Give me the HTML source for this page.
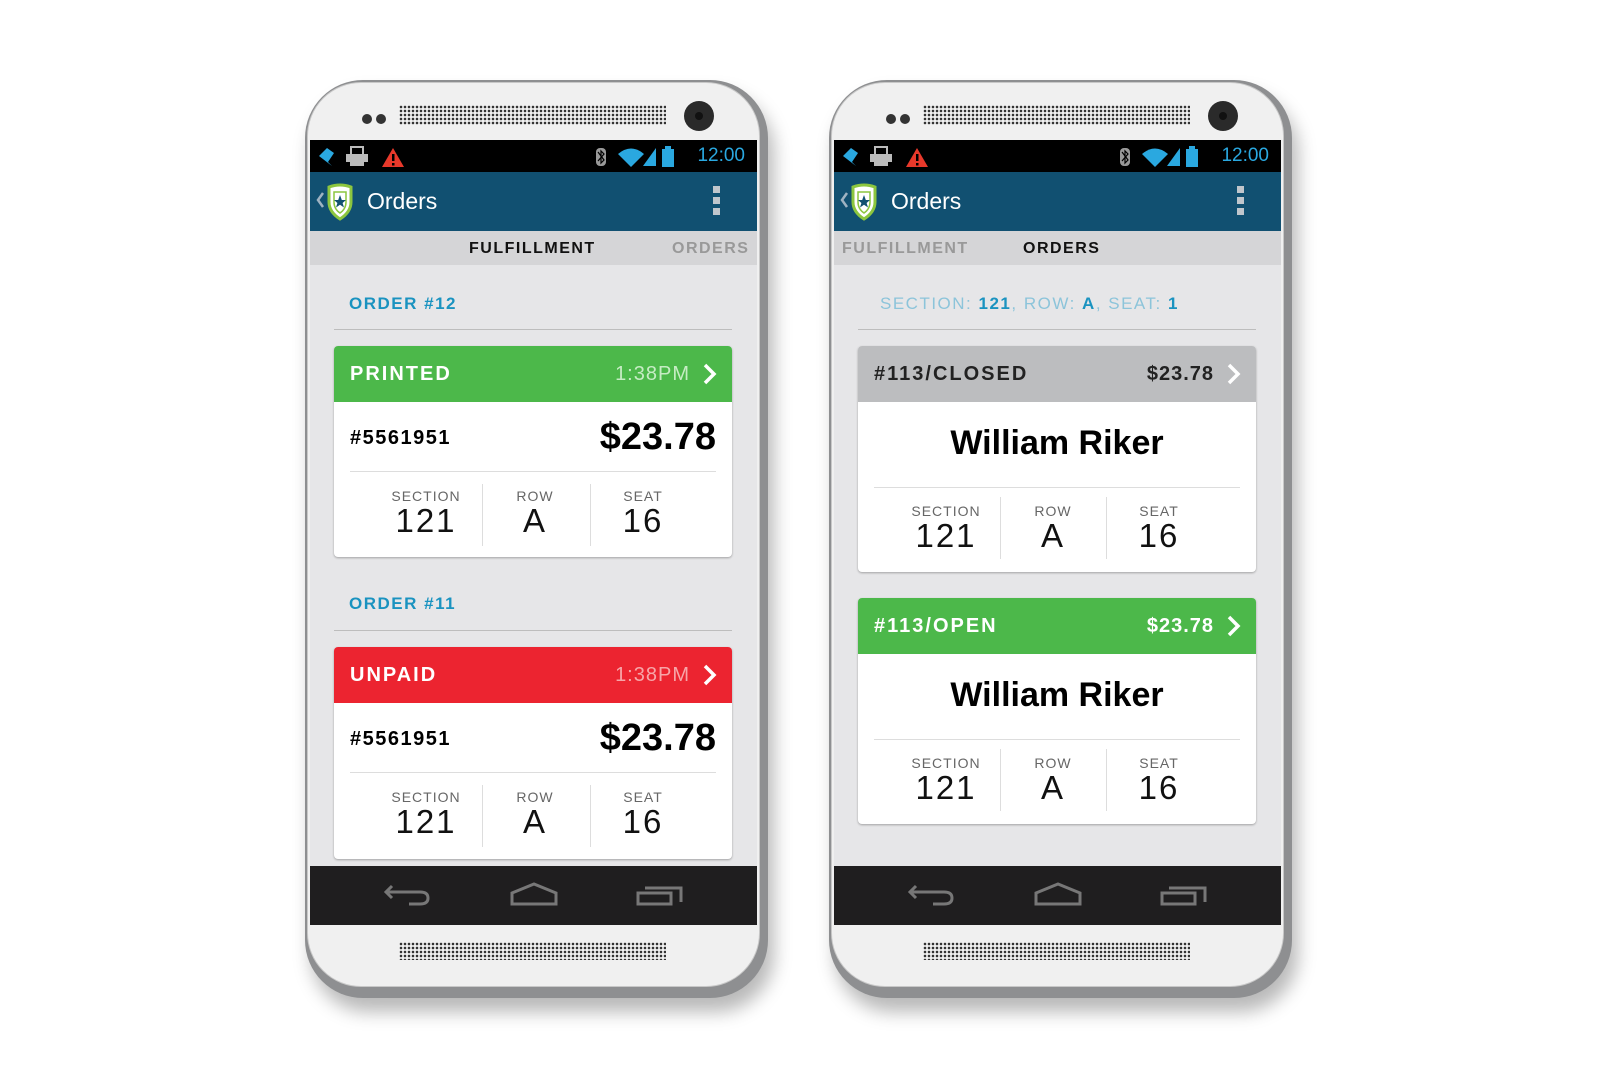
<!DOCTYPE html>
<html><head><meta charset="utf-8"><style>
*{margin:0;padding:0;box-sizing:border-box}
body{width:1600px;height:1080px;background:#fff;position:relative;overflow:hidden;font-family:"Liberation Sans",sans-serif}
.ph{position:absolute;top:80px;width:463px;height:918px}
.outer{position:absolute;left:0;top:0;width:463px;height:918px;border-radius:58px;background:#8e8f91;box-shadow:6px 14px 18px rgba(0,0,0,.28)}
.inner{position:absolute;left:2px;top:2px;width:453px;height:905px;border-radius:54px;background:#f0f0f0;border:1px solid #c8c8c8}
.grille{position:absolute;left:94px;width:267px;height:20px;background-image:radial-gradient(circle,#333 1.1px,transparent 1.5px);background-size:4px 4px}
.dot{position:absolute;width:10px;height:10px;border-radius:50%;background:#333;top:34px}
.cam{position:absolute;left:379px;top:21px;width:30px;height:30px;border-radius:50%;background:#2a2a2a}
.cam:after{content:"";position:absolute;left:11px;top:11px;width:8px;height:8px;border-radius:50%;background:#111}
.scr{position:absolute;left:5px;top:60px;width:447px;height:785px;background:#e6e6e8;overflow:hidden}
.sb{position:absolute;left:0;top:0;width:447px;height:32px;background:#000}
.time{position:absolute;right:12px;top:5px;color:#2aa8e0;font-size:19px}
.ab{position:absolute;left:0;top:32px;width:447px;height:59px;background:#115071}
.ab .t{position:absolute;left:57px;top:16px;color:#fff;font-size:23px}
.menu{position:absolute;left:403px;top:14px;width:7px}
.menu i{display:block;width:7px;height:7px;background:#c0c6cc;margin-bottom:4px}
.tabs{position:absolute;left:0;top:91px;width:447px;height:34px;background:#d5d5d7}
.tab{position:absolute;top:9px;font-size:16px;font-weight:bold;letter-spacing:1.5px}
.nav{position:absolute;left:0;top:726px;width:447px;height:59px;background:#1f1e1f}
.lbl{position:absolute;font-size:17px;font-weight:bold;letter-spacing:1.5px;color:#1a93c0}
.hr{position:absolute;left:24px;width:398px;height:1px;background:#bdbdbd}
.card{position:absolute;left:24px;width:398px;background:#fff;border-radius:4px;box-shadow:0 1px 2px rgba(0,0,0,.3);overflow:hidden}
.hd{position:relative;height:56px;color:#fff}
.hd .a{position:absolute;left:16px;top:17px;font-size:20px;font-weight:bold;letter-spacing:2px}
.hd .b{position:absolute;right:42px;top:17px;font-size:20px;letter-spacing:1px}
.hd svg{position:absolute;right:14px;top:17px}
.num{position:absolute;left:16px;top:81px;font-size:20px;font-weight:bold;letter-spacing:1.5px}
.price{position:absolute;right:16px;top:70px;font-size:38px;font-weight:bold}
.dv{position:absolute;left:16px;right:16px;height:1px;background:#ddd}
.col{position:absolute;width:108px;text-align:center}
.col .l{font-size:14px;color:#666;letter-spacing:1px}
.col .n{font-size:33px;color:#111;letter-spacing:2px;margin-top:-2px}
.vl{position:absolute;width:1px;height:62px;background:#ddd}
.name{position:absolute;left:0;width:398px;text-align:center;top:78px;font-size:34px;font-weight:bold}
</style></head><body>

<!-- PHONE 1 -->
<div class="ph" style="left:305px">
<div class="outer"></div><div class="inner"></div>
<div class="dot" style="left:57px"></div><div class="dot" style="left:71px"></div>
<div class="grille" style="top:25px"></div>
<div class="cam"></div>
<div class="grille" style="top:862px;height:18px"></div>
<div class="scr">
 <div class="sb">
  <svg width="447" height="32" style="position:absolute;left:0;top:0">
   <path d="M9 16 L17 8 L24 13 L18 22 L22 26 Z" fill="#2aa8e0"/>
   <rect x="41" y="7" width="12" height="8" fill="none" stroke="#bbb" stroke-width="2"/><rect x="36" y="14" width="22" height="8" fill="#bbb"/><rect x="40" y="22" width="14" height="4" fill="#bbb"/>
   <path d="M72 27 L83 8 L94 27 Z" fill="#e8392b"/><rect x="82" y="14" width="2.5" height="7" fill="#000"/><rect x="82" y="23" width="2.5" height="2.5" fill="#000"/>
   <rect x="286" y="8" width="10" height="18" rx="4" fill="#999"/><path d="M288 12 L294 20 L291 23 L291 11 L294 14 L288 21" stroke="#000" stroke-width="1.2" fill="none"/>
   <path d="M308 14 Q321 3 334 14 L321 27 Z" fill="#2aa8e0"/>
   <path d="M333 26 L346 8 L346 26 Z" fill="#2aa8e0"/>
   <rect x="352" y="9" width="12" height="18" fill="#2aa8e0"/><rect x="355" y="6" width="6" height="3" fill="#2aa8e0"/>
  </svg>
  <div class="time">12:00</div>
 </div>
 <div class="ab">
  <svg width="50" height="40" style="position:absolute;left:4px;top:10px">
   <path d="M9 11 L4 18 L9 25" stroke="#9fb3c2" stroke-width="2.5" fill="none"/>
   <path d="M15 5 Q26 1 37 5 L37 20 Q37 30 26 37 Q15 30 15 20 Z" fill="#fff" stroke="#8cc63f" stroke-width="3"/>
   <path d="M20 10 L32 10 L32 20 Q32 27 26 31 Q20 27 20 20 Z" fill="#fff" stroke="#8cc63f" stroke-width="1.5"/>
   <path d="M26 13 L27.8 18 L32 18 L28.6 21 L30 25.5 L26 22.7 L22 25.5 L23.4 21 L20 18 L24.2 18 Z" fill="#115071"/>
  </svg>
  <div class="t">Orders</div>
  <div class="menu"><i></i><i></i><i></i></div>
 </div>
 <div class="tabs">
  <div class="tab" style="left:159px;color:#111">FULFILLMENT</div>
  <div class="tab" style="left:362px;color:#999">ORDERS</div>
 </div>

 <div class="lbl" style="left:39px;top:154px">ORDER #12</div>
 <div class="hr" style="top:189px"></div>
 <div class="card" style="top:206px;height:211px">
  <div class="hd" style="background:#4cb84a"><div class="a">PRINTED</div><div class="b" style="color:#c6ecc4">1:38PM</div>
   <svg width="16" height="22"><path d="M3 2 L12 11 L3 20" stroke="#fff" stroke-width="3.5" fill="none"/></svg></div>
  <div class="num">#5561951</div><div class="price">$23.78</div>
  <div class="dv" style="top:125px"></div>
  <div class="vl" style="left:148px;top:138px"></div><div class="vl" style="left:256px;top:138px"></div>
  <div class="col" style="left:38px;top:142px"><div class="l">SECTION</div><div class="n">121</div></div>
  <div class="col" style="left:147px;top:142px"><div class="l">ROW</div><div class="n">A</div></div>
  <div class="col" style="left:255px;top:142px"><div class="l">SEAT</div><div class="n">16</div></div>
 </div>

 <div class="lbl" style="left:39px;top:454px">ORDER #11</div>
 <div class="hr" style="top:490px"></div>
 <div class="card" style="top:507px;height:212px">
  <div class="hd" style="background:#ec2430"><div class="a">UNPAID</div><div class="b" style="color:#f7a5a8">1:38PM</div>
   <svg width="16" height="22"><path d="M3 2 L12 11 L3 20" stroke="#fff" stroke-width="3.5" fill="none"/></svg></div>
  <div class="num">#5561951</div><div class="price">$23.78</div>
  <div class="dv" style="top:125px"></div>
  <div class="vl" style="left:148px;top:138px"></div><div class="vl" style="left:256px;top:138px"></div>
  <div class="col" style="left:38px;top:142px"><div class="l">SECTION</div><div class="n">121</div></div>
  <div class="col" style="left:147px;top:142px"><div class="l">ROW</div><div class="n">A</div></div>
  <div class="col" style="left:255px;top:142px"><div class="l">SEAT</div><div class="n">16</div></div>
 </div>

 <div class="nav">
  <svg width="447" height="59">
   <path d="M82 20 L76 26 L82 32 M77 26 L110 26 Q118 26 118 32 Q118 38 110 38 L99 38" stroke="#777" stroke-width="3" fill="none"/>
   <path d="M202 38 L202 27 L224 18 L246 27 L246 38 Z" stroke="#777" stroke-width="3" fill="none"/>
   <path d="M328 38 L328 27 L361 27 L361 38 Z M335 22 L371 22 L371 36" stroke="#777" stroke-width="3" fill="none"/>
  </svg>
 </div>
</div>
</div>

<!-- PHONE 2 -->
<div class="ph" style="left:829px">
<div class="outer"></div><div class="inner"></div>
<div class="dot" style="left:57px"></div><div class="dot" style="left:71px"></div>
<div class="grille" style="top:25px"></div>
<div class="cam"></div>
<div class="grille" style="top:862px;height:18px"></div>
<div class="scr">
 <div class="sb">
  <svg width="447" height="32" style="position:absolute;left:0;top:0">
   <path d="M9 16 L17 8 L24 13 L18 22 L22 26 Z" fill="#2aa8e0"/>
   <rect x="41" y="7" width="12" height="8" fill="none" stroke="#bbb" stroke-width="2"/><rect x="36" y="14" width="22" height="8" fill="#bbb"/><rect x="40" y="22" width="14" height="4" fill="#bbb"/>
   <path d="M72 27 L83 8 L94 27 Z" fill="#e8392b"/><rect x="82" y="14" width="2.5" height="7" fill="#000"/><rect x="82" y="23" width="2.5" height="2.5" fill="#000"/>
   <rect x="286" y="8" width="10" height="18" rx="4" fill="#999"/><path d="M288 12 L294 20 L291 23 L291 11 L294 14 L288 21" stroke="#000" stroke-width="1.2" fill="none"/>
   <path d="M308 14 Q321 3 334 14 L321 27 Z" fill="#2aa8e0"/>
   <path d="M333 26 L346 8 L346 26 Z" fill="#2aa8e0"/>
   <rect x="352" y="9" width="12" height="18" fill="#2aa8e0"/><rect x="355" y="6" width="6" height="3" fill="#2aa8e0"/>
  </svg>
  <div class="time">12:00</div>
 </div>
 <div class="ab">
  <svg width="50" height="40" style="position:absolute;left:4px;top:10px">
   <path d="M9 11 L4 18 L9 25" stroke="#9fb3c2" stroke-width="2.5" fill="none"/>
   <path d="M15 5 Q26 1 37 5 L37 20 Q37 30 26 37 Q15 30 15 20 Z" fill="#fff" stroke="#8cc63f" stroke-width="3"/>
   <path d="M20 10 L32 10 L32 20 Q32 27 26 31 Q20 27 20 20 Z" fill="#fff" stroke="#8cc63f" stroke-width="1.5"/>
   <path d="M26 13 L27.8 18 L32 18 L28.6 21 L30 25.5 L26 22.7 L22 25.5 L23.4 21 L20 18 L24.2 18 Z" fill="#115071"/>
  </svg>
  <div class="t">Orders</div>
  <div class="menu"><i></i><i></i><i></i></div>
 </div>
 <div class="tabs">
  <div class="tab" style="left:8px;color:#999">FULFILLMENT</div>
  <div class="tab" style="left:189px;color:#111">ORDERS</div>
 </div>

 <div class="lbl" style="left:46px;top:154px;font-weight:normal;color:#8cc4da">SECTION: <b style="color:#1a93c0">121</b>, ROW: <b style="color:#1a93c0">A</b>, SEAT: <b style="color:#1a93c0">1</b></div>
 <div class="hr" style="top:189px"></div>
 <div class="card" style="top:206px;height:226px">
  <div class="hd" style="background:#bcbdbf;color:#222"><div class="a">#113/CLOSED</div><div class="b" style="font-weight:bold">$23.78</div>
   <svg width="16" height="22"><path d="M3 2 L12 11 L3 20" stroke="#fff" stroke-width="3.5" fill="none"/></svg></div>
  <div class="name">William Riker</div>
  <div class="dv" style="top:141px"></div>
  <div class="vl" style="left:142px;top:151px"></div><div class="vl" style="left:248px;top:151px"></div>
  <div class="col" style="left:34px;top:157px"><div class="l">SECTION</div><div class="n">121</div></div>
  <div class="col" style="left:141px;top:157px"><div class="l">ROW</div><div class="n">A</div></div>
  <div class="col" style="left:247px;top:157px"><div class="l">SEAT</div><div class="n">16</div></div>
 </div>

 <div class="card" style="top:458px;height:226px">
  <div class="hd" style="background:#4cb84a"><div class="a">#113/OPEN</div><div class="b" style="font-weight:bold">$23.78</div>
   <svg width="16" height="22"><path d="M3 2 L12 11 L3 20" stroke="#fff" stroke-width="3.5" fill="none"/></svg></div>
  <div class="name">William Riker</div>
  <div class="dv" style="top:141px"></div>
  <div class="vl" style="left:142px;top:151px"></div><div class="vl" style="left:248px;top:151px"></div>
  <div class="col" style="left:34px;top:157px"><div class="l">SECTION</div><div class="n">121</div></div>
  <div class="col" style="left:141px;top:157px"><div class="l">ROW</div><div class="n">A</div></div>
  <div class="col" style="left:247px;top:157px"><div class="l">SEAT</div><div class="n">16</div></div>
 </div>

 <div class="nav">
  <svg width="447" height="59">
   <path d="M82 20 L76 26 L82 32 M77 26 L110 26 Q118 26 118 32 Q118 38 110 38 L99 38" stroke="#777" stroke-width="3" fill="none"/>
   <path d="M202 38 L202 27 L224 18 L246 27 L246 38 Z" stroke="#777" stroke-width="3" fill="none"/>
   <path d="M328 38 L328 27 L361 27 L361 38 Z M335 22 L371 22 L371 36" stroke="#777" stroke-width="3" fill="none"/>
  </svg>
 </div>
</div>
</div>
</body></html>
